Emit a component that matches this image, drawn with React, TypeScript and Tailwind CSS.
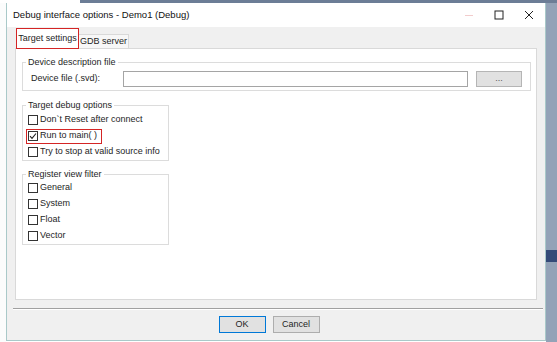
import React from "react";

const font = { fontFamily: '"Liberation Sans", Arial, sans-serif' };

function Check({ label, checked }: { label: string; checked?: boolean }) {
  return (
    <div className="flex items-center h-[16px] gap-[2px] whitespace-nowrap">
      <div className="w-[10px] h-[10px] border border-[#333] bg-white flex items-center justify-center">
        {checked && (
          <svg width="8" height="8" viewBox="0 0 8 8">
            <path d="M1 4.2 L3 6.3 L7 1.5" stroke="#222" strokeWidth="1.1" fill="none" />
          </svg>
        )}
      </div>
      <span>{label}</span>
    </div>
  );
}

function Group({ title, className, children }: { title: string; className: string; children: React.ReactNode }) {
  return (
    <fieldset className={`border border-[#dcdcdc] ${className}`}>
      <legend className="ml-[3px] px-[2px] leading-[10px]">{title}</legend>
      {children}
    </fieldset>
  );
}

export default function App() {
  return (
    <div className="w-[557px] h-[342px] bg-white flex flex-col overflow-hidden text-[9px] text-[#1e1e1e]" style={font}>
      {/* top strip */}
      <div className="h-[3px] flex">
        <div className="w-[80px] bg-white" />
        <div className="flex-1 bg-[#6c7d96]" />
      </div>
      <div className="flex flex-1">
        <div className="w-[6px] bg-[#fbfcfc]" />
        {/* window */}
        <div className="w-[540px] h-[338px] flex flex-col border-l border-r border-b border-[#a9c9c9] bg-[#f0f0f0]">
          {/* title bar */}
          <div className="h-[24px] bg-white flex items-center pl-[6px] shrink-0">
            <span className="text-[9.5px] text-[#111]">Debug interface options - Demo1 (Debug)</span>
            <div className="ml-auto flex items-center h-full">
              <div className="w-[30px] flex justify-center">
                <div className="w-[8px] h-[1px] bg-[#f2cccc]" />
              </div>
              <div className="w-[30px] flex justify-center">
                <svg width="10" height="10" viewBox="0 0 10 10">
                  <rect x="1" y="1" width="8" height="8" stroke="#222" strokeWidth="1" fill="none" />
                </svg>
              </div>
              <div className="w-[30px] flex justify-center mr-[1px]">
                <svg width="10" height="10" viewBox="0 0 10 10">
                  <path d="M1 1 L9 9 M9 1 L1 9" stroke="#222" strokeWidth="1" />
                </svg>
              </div>
            </div>
          </div>
          {/* body */}
          <div className="flex-1 flex flex-col pl-[8px] pr-[8px] pt-[1px]">
            {/* tabs */}
            <div className="flex items-end h-[20px] pl-[1px] relative z-10">
              <div className="h-[21px] w-[63px] bg-white border border-[#d42525] flex items-center justify-center -mb-[1px] whitespace-nowrap">
                Target settings
              </div>
              <div className="h-[14px] w-[50px] bg-[#f7f7f7] border border-[#d9d9d9] border-l-0 border-b-0 flex items-center justify-center whitespace-nowrap">
                GDB server
              </div>
            </div>
            {/* panel */}
            <div className="h-[252px] w-[522px] bg-white border border-[#d9d9d9] pl-[6px] pt-[8px] flex flex-col">
              <Group title="Device description file" className="w-[509px] h-[34px]">
                <div className="flex items-center h-[22px] pl-[8px] pt-[2px]">
                  <span className="w-[92px]">Device file (.svd):</span>
                  <div className="w-[345px] h-[16px] border border-[#a5a5a5] bg-white" />
                  <div className="ml-[8px] w-[46px] h-[16px] border border-[#b5b5b5] bg-[#e1e1e1] flex items-center justify-center text-[#555]">
                    ...
                  </div>
                </div>
              </Group>
              <Group title="Target debug options" className="mt-[9px] w-[147px] h-[61px]">
                <div className="pl-[5px] mt-[2px] flex flex-col">
                  <Check label="Don`t Reset after connect" />
                  <div className="relative">
                    <div className="absolute -left-[2px] top-[1px] w-[76px] h-[15px] border border-[#d42525]" />
                    <Check label="Run to main( )" checked />
                  </div>
                  <Check label="Try to stop at valid source info" />
                </div>
              </Group>
              <Group title="Register view filter" className="mt-[8px] w-[147px] h-[76px]">
                <div className="pl-[5px] mt-[1px] flex flex-col">
                  <Check label="General" />
                  <Check label="System" />
                  <Check label="Float" />
                  <Check label="Vector" />
                </div>
              </Group>
            </div>
            {/* separator */}
            <div className="mt-[8px] -ml-[2px] w-[530px] h-[2px] border-t border-[#a0a0a0] border-b border-b-white" />
            {/* buttons */}
            <div className="flex justify-center gap-[7px] mt-[6px] pr-[14px]">
              <div className="w-[47px] h-[17px] border border-[#0078d7] bg-[#e1e1e1] flex items-center justify-center">OK</div>
              <div className="w-[47px] h-[17px] border border-[#adadad] bg-[#e1e1e1] flex items-center justify-center">Cancel</div>
            </div>
          </div>
        </div>
        {/* right strip */}
        <div className="flex-1 bg-[#93a2b7] flex flex-col">
          <div className="h-[247px]" />
          <div className="h-[12px] bg-[#344a78]" />
        </div>
      </div>
    </div>
  );
}
